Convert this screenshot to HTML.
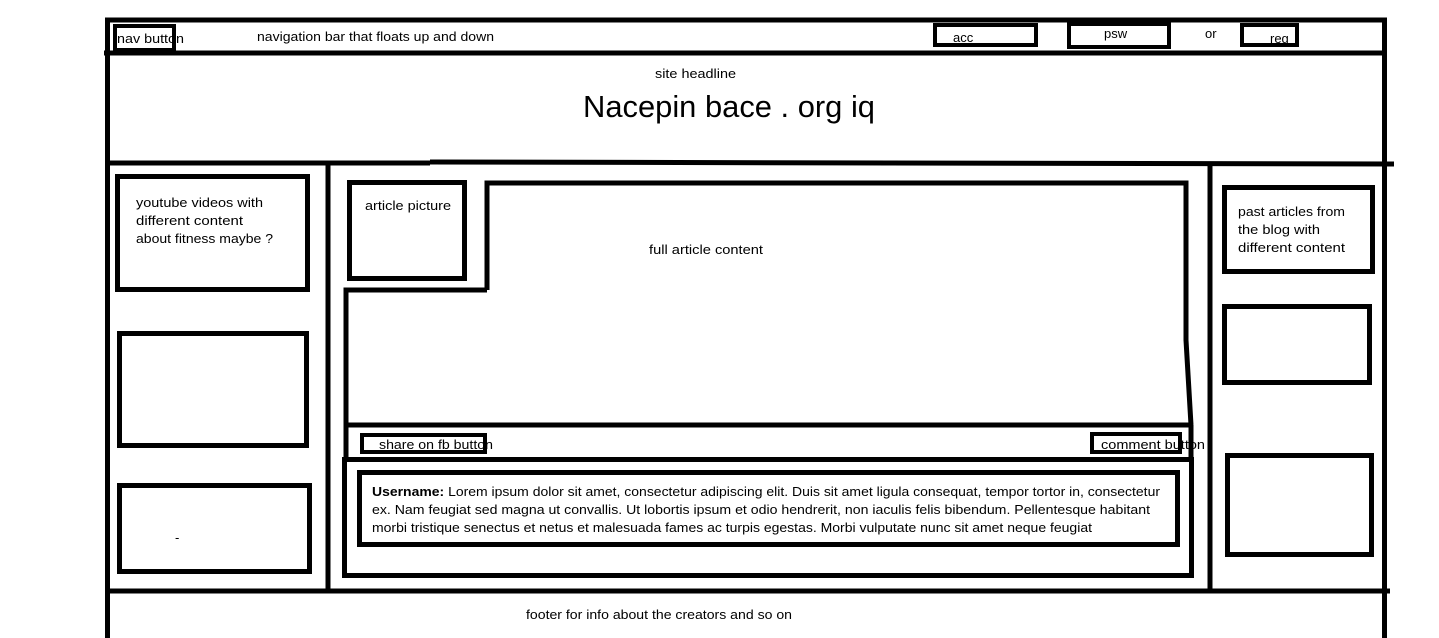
<!DOCTYPE html>
<html><head><meta charset="utf-8"><style>
html,body{margin:0;padding:0;background:#fff;width:1439px;height:638px;overflow:hidden}
svg{display:block}
text{font-family:"Liberation Sans",sans-serif;font-size:13px;fill:#000}
</style></head><body>
<svg width="1439" height="638" viewBox="0 0 1439 638" fill="none" stroke="#000" stroke-width="5">
<line x1="105" y1="20" x2="1387" y2="20"/>
<line x1="107.5" y1="18" x2="107.5" y2="638"/>
<line x1="1384.5" y1="18" x2="1384.5" y2="638"/>
<line x1="104" y1="53" x2="1387" y2="53"/>
<line x1="106" y1="163" x2="430" y2="163"/>
<line x1="430" y1="162" x2="1394" y2="164"/>
<line x1="106" y1="591" x2="1390" y2="591"/>
<line x1="328" y1="161" x2="328" y2="590"/>
<line x1="1210" y1="165" x2="1210" y2="590"/>
<rect x="115" y="26" width="59" height="24" stroke-width="4"/>
<rect x="935" y="25" width="101" height="20" stroke-width="4"/>
<rect x="1069" y="24" width="100" height="23" stroke-width="4"/>
<rect x="1242" y="25" width="55" height="20" stroke-width="4"/>
<rect x="117.5" y="176.5" width="190" height="113"/>
<rect x="119.5" y="333.5" width="187" height="112"/>
<rect x="119.5" y="485.5" width="190" height="86"/>
<rect x="349.5" y="182.5" width="115" height="96"/>
<polyline points="487,290 487,183 1186,183 1186,340 1191,425"/>
<polyline points="487,290 346,290 346,426"/>
<line x1="344" y1="425" x2="1193" y2="425"/>
<line x1="346" y1="425" x2="346" y2="458"/>
<line x1="1191" y1="425" x2="1191" y2="458"/>
<rect x="362" y="435" width="123" height="17" stroke-width="4"/>
<rect x="1092" y="434" width="88" height="18" stroke-width="4"/>
<rect x="344.5" y="459.5" width="847" height="116"/>
<rect x="359.5" y="472.5" width="818" height="72"/>
<rect x="1224.5" y="187.5" width="148" height="84"/>
<rect x="1224.5" y="306.5" width="145" height="76"/>
<rect x="1227.5" y="455.5" width="144" height="99"/>
<g stroke="none">
<text x="117" y="43" textLength="67" lengthAdjust="spacingAndGlyphs">nav button</text>
<text x="257" y="41" textLength="237" lengthAdjust="spacingAndGlyphs">navigation bar that floats up and down</text>
<text x="953" y="42">acc</text>
<text x="1104" y="38">psw</text>
<text x="1205" y="38">or</text>
<text x="1270" y="43">reg</text>
<text x="655" y="78" textLength="81" lengthAdjust="spacingAndGlyphs">site headline</text>
<text x="583" y="117" style="font-size:31px" textLength="292" lengthAdjust="spacingAndGlyphs">Nacepin bace . org iq</text>
<text x="136" y="207" textLength="127" lengthAdjust="spacingAndGlyphs">youtube videos with</text>
<text x="136" y="225" textLength="107" lengthAdjust="spacingAndGlyphs">different content</text>
<text x="136" y="243" textLength="137" lengthAdjust="spacingAndGlyphs">about fitness maybe ?</text>
<text x="175" y="542">-</text>
<text x="365" y="210" textLength="86" lengthAdjust="spacingAndGlyphs">article picture</text>
<text x="649" y="254" textLength="114" lengthAdjust="spacingAndGlyphs">full article content</text>
<text x="379" y="449" textLength="114" lengthAdjust="spacingAndGlyphs">share on fb button</text>
<text x="1101" y="449" textLength="104" lengthAdjust="spacingAndGlyphs">comment button</text>
<text x="1238" y="216" textLength="107" lengthAdjust="spacingAndGlyphs">past articles from</text>
<text x="1238" y="234" textLength="82" lengthAdjust="spacingAndGlyphs">the blog with</text>
<text x="1238" y="252" textLength="107" lengthAdjust="spacingAndGlyphs">different content</text>
<text x="372" y="496" textLength="788" lengthAdjust="spacingAndGlyphs"><tspan style="font-weight:bold">Username:</tspan> Lorem ipsum dolor sit amet, consectetur adipiscing elit. Duis sit amet ligula consequat, tempor tortor in, consectetur</text>
<text x="372" y="514" textLength="778" lengthAdjust="spacingAndGlyphs">ex. Nam feugiat sed magna ut convallis. Ut lobortis ipsum et odio hendrerit, non iaculis felis bibendum. Pellentesque habitant</text>
<text x="372" y="532" textLength="720" lengthAdjust="spacingAndGlyphs">morbi tristique senectus et netus et malesuada fames ac turpis egestas. Morbi vulputate nunc sit amet neque feugiat</text>
<text x="526" y="619" textLength="266" lengthAdjust="spacingAndGlyphs">footer for info about the creators and so on</text>
</g>
</svg>
</body></html>
